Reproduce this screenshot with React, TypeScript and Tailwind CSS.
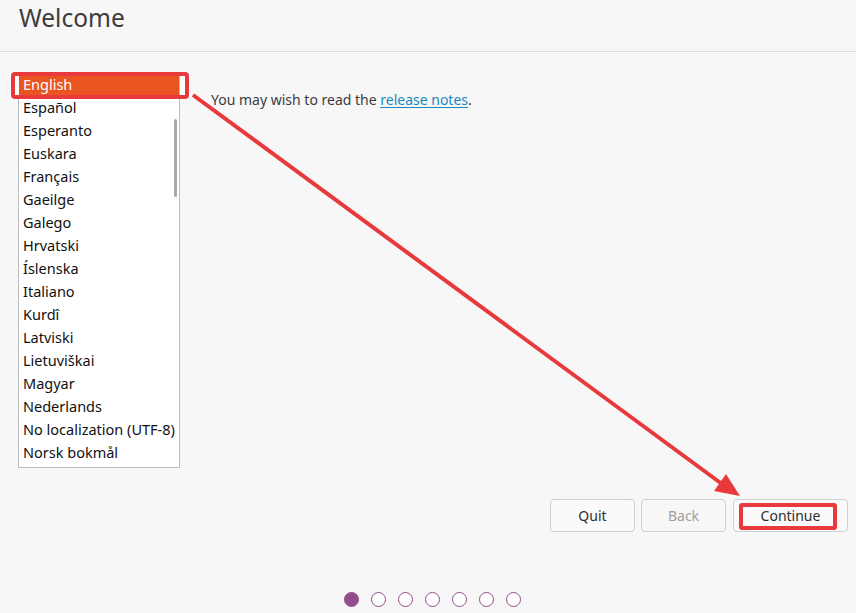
import React from "react";

const langs = [
  "English",
  "Español",
  "Esperanto",
  "Euskara",
  "Français",
  "Gaeilge",
  "Galego",
  "Hrvatski",
  "Íslenska",
  "Italiano",
  "Kurdî",
  "Latviski",
  "Lietuviškai",
  "Magyar",
  "Nederlands",
  "No localization (UTF-8)",
  "Norsk bokmål",
];

export default function App() {
  return (
    <div
      className="relative w-[856px] h-[613px] bg-[#f7f7f7] overflow-hidden flex flex-col text-[#3d3d3d]"
      style={{ fontFamily: '"Noto Sans", "Open Sans", sans-serif' }}
    >
      <div className="h-[52px] border-b border-[#dcdcdc] px-[19px] flex items-start">
        <h1 className="text-[24.5px] leading-[36px] text-[#3c3c3c] mt-[0px]">Welcome</h1>
      </div>

      <div className="flex pt-[20px] pl-[18px]">
        <div className="relative w-[162px] h-[396px] border border-[#bdbdbd] bg-white overflow-hidden">
          {langs.map((l, i) => (
            <div
              key={l}
              className={
                "h-[23px] pl-[4px] text-[14.5px] leading-[23px] whitespace-nowrap " +
                (i === 0 ? "bg-[#e95420] text-white" : "text-[#111111]")
              }
            >
              {l}
            </div>
          ))}
          <div className="absolute right-[2px] top-[46px] w-[3px] h-[78px] rounded-full bg-[#a8a8a8]" />
        </div>
        <div className="ml-[31px] mt-[18px] text-[14px] leading-[20px] text-[#3c3c3c]">
          You may wish to read the{" "}
          <span className="text-[#1b8ac0] underline underline-offset-2">release notes</span>.
        </div>
      </div>

      <div className="flex justify-end gap-[6px] pr-[8px] mt-[31px]">
        <button className="w-[85px] h-[33px] rounded-[4px] border border-[#cfcfcf] bg-[#fafafa] text-[14px] text-[#2e2e2e]">
          Quit
        </button>
        <button className="w-[85px] h-[33px] rounded-[4px] border border-[#cfcfcf] bg-[#f7f7f7] text-[14px] text-[#a0a0a0]">
          Back
        </button>
        <button className="ml-[1px] w-[115px] h-[33px] rounded-[4px] border border-[#cfcfcf] bg-[#fafafa] text-[14px] text-[#2e2e2e]">
          Continue
        </button>
      </div>

      <div className="flex justify-center gap-[12px] mt-[60px] pl-[8px]">
        {[0, 1, 2, 3, 4, 5, 6].map((i) => (
          <div
            key={i}
            className={
              "w-[15px] h-[15px] rounded-full border-[1.5px] border-[#924d8b] " +
              (i === 0 ? "bg-[#924d8b]" : "bg-white")
            }
          />
        ))}
      </div>

      {/* annotations */}
      <div className="absolute left-[11px] top-[72px] w-[178px] h-[27px] rounded-[4px] border-[4px] border-[#e8393d]" />
      <div className="absolute left-[15px] top-[76px] w-[4px] h-[19px] bg-white" />
      <div className="absolute left-[180px] top-[76px] w-[5px] h-[19px] bg-white" />
      <div className="absolute left-[739px] top-[503px] w-[98px] h-[27px] rounded-[3px] border-[4px] border-[#e8393d]" />
      <svg className="absolute left-0 top-0 pointer-events-none" width="856" height="613">
        <line x1="193" y1="95" x2="722" y2="484" stroke="#e8393d" strokeWidth="4" />
        <polygon points="740,496 714,491 726,474" fill="#e8393d" />
      </svg>
    </div>
  );
}
